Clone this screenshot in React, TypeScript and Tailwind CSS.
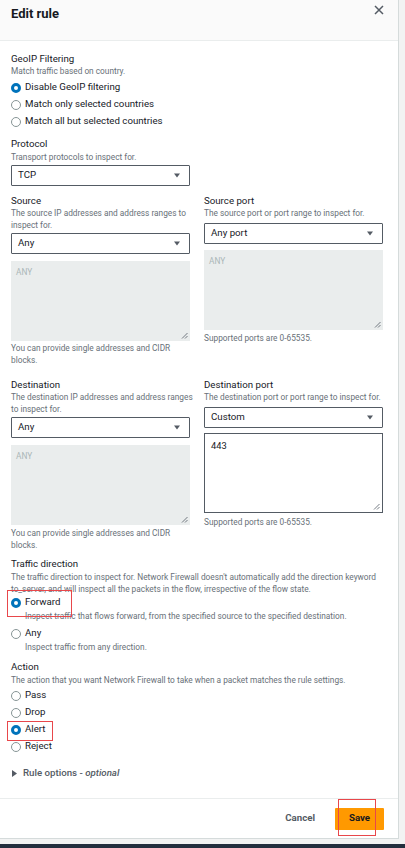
import React from "react";

const Label = ({ children, className = "" }: { children: React.ReactNode; className?: string }) => (
  <div className={`text-[9.7px] leading-[13px] text-[#16191f] ${className}`}>{children}</div>
);

const Desc = ({ children, className = "" }: { children: React.ReactNode; className?: string }) => (
  <div className={`text-[8.3px] leading-[12px] text-[#687078] whitespace-nowrap ${className}`}>{children}</div>
);

const Radio = ({ checked }: { checked?: boolean }) =>
  checked ? (
    <span className="w-[10px] h-[10px] rounded-full border-[3px] border-[#0073bb] bg-white shrink-0" />
  ) : (
    <span className="w-[10px] h-[10px] rounded-full border border-[#879596] bg-white shrink-0" />
  );

const RadioRow = ({
  label,
  checked,
  className = "",
  children,
}: {
  label: string;
  checked?: boolean;
  className?: string;
  children?: React.ReactNode;
}) => (
  <div className={`relative flex items-center gap-[4px] h-[17px] text-[9.7px] text-[#16191f] ${className}`}>
    <Radio checked={checked} />
    <span>{label}</span>
    {children}
  </div>
);

const Caret = () => (
  <svg width="6" height="5" viewBox="0 0 6 5" className="shrink-0">
    <path d="M0 0.5 L6 0.5 L3 4.5 Z" fill="#545b64" />
  </svg>
);

const Select = ({ value, className = "" }: { value: string; className?: string }) => (
  <div
    className={`h-[21px] border border-[#545b64] rounded-[1px] bg-white flex items-center justify-between pl-[6px] pr-[9px] text-[9.7px] text-[#16191f] ${className}`}
  >
    <span>{value}</span>
    <Caret />
  </div>
);

const Grip = () => (
  <svg width="7" height="7" viewBox="0 0 7 7" className="absolute right-[2px] bottom-[2px]">
    <path d="M1 6.5 L6.5 1 M4 6.5 L6.5 4" stroke="#545b64" strokeWidth="0.8" />
  </svg>
);

const GrayArea = ({ className = "" }: { className?: string }) => (
  <div className={`relative h-[80px] bg-[#eaeded] pl-[5px] pt-[5px] text-[8.3px] text-[#aab7b8] ${className}`}>
    ANY
    <Grip />
  </div>
);

export default function App() {
  return (
    <div className="w-[405px] h-[848px] bg-[#f2f3f3] overflow-hidden font-['Roboto',sans-serif] flex flex-col">
      <div className="w-[399px] h-[839px] bg-white border-r border-b border-[#d5dbdb] flex flex-col">
        {/* header */}
        <div className="h-[41px] bg-[#fafafa] border-b border-[#eaeded] flex items-start justify-between pl-[11px] pr-[14px] shrink-0">
          <div className="mt-[6px] text-[13px] leading-[16px] font-bold text-[#16191f]">Edit rule</div>
          <svg width="10" height="10" viewBox="0 0 10 10" className="mt-[5px]">
            <path d="M1 1 L9 9 M9 1 L1 9" stroke="#545b64" strokeWidth="1.5" />
          </svg>
        </div>

        {/* body */}
        <div className="flex-1 pl-[11px] pr-[15px] pt-[11px]">
          <Label>GeoIP Filtering</Label>
          <Desc>Match traffic based on country.</Desc>
          <div className="mt-[2px]">
            <RadioRow label="Disable GeoIP filtering" checked />
            <RadioRow label="Match only selected countries" />
            <RadioRow label="Match all but selected countries" />
          </div>

          <Label className="mt-[7px]">Protocol</Label>
          <Desc className="mt-[1px]">Transport protocols to inspect for.</Desc>
          <Select value="TCP" className="mt-[2px] w-[179px]" />

          <div className="grid grid-cols-2 gap-x-[14px] mt-[8px]">
            <div>
              <Label>Source</Label>
              <Desc>
                The source IP addresses and address ranges to
                <br />
                inspect for.
              </Desc>
              <Select value="Any" className="mt-[2px]" />
              <GrayArea className="mt-[7px]" />
              <Desc className="mt-[1px]">
                You can provide single addresses and CIDR
                <br />
                blocks.
              </Desc>
            </div>
            <div>
              <Label>Source port</Label>
              <Desc>The source port or port range to inspect for.</Desc>
              <Select value="Any port" className="mt-[4px]" />
              <GrayArea className="mt-[6px]" />
              <Desc className="mt-[2px]">Supported ports are 0-65535.</Desc>
            </div>
          </div>

          <div className="grid grid-cols-2 gap-x-[14px] mt-[12px]">
            <div>
              <Label>Destination</Label>
              <Desc>
                The destination IP addresses and address ranges
                <br />
                to inspect for.
              </Desc>
              <Select value="Any" className="mt-[2px]" />
              <GrayArea className="mt-[7px]" />
              <Desc className="mt-[2px]">
                You can provide single addresses and CIDR
                <br />
                blocks.
              </Desc>
            </div>
            <div>
              <Label>Destination port</Label>
              <Desc>The destination port or port range to inspect for.</Desc>
              <Select value="Custom" className="mt-[4px]" />
              <div className="relative mt-[5px] h-[80px] border border-[#545b64] bg-white pl-[6px] pt-[5px] text-[9.3px] text-[#16191f]">
                443
                <Grip />
              </div>
              <Desc className="mt-[3px]">Supported ports are 0-65535.</Desc>
            </div>
          </div>

          <Label className="mt-[6px]">Traffic direction</Label>
          <Desc className="mt-[1px]">
            The traffic direction to inspect for. Network Firewall doesn't automatically add the direction keyword
            <br />
            to_server, and will inspect all the packets in the flow, irrespective of the flow state.
          </Desc>
          <RadioRow label="Forward" checked className="!h-[15px]">
            <span className="absolute left-[-4px] top-[-5px] w-[65px] h-[27px] border border-[#e8474b]" />
          </RadioRow>
          <Desc className="pl-[14px]">
            Inspect traffic that flows forward, from the specified source to the specified destination.
          </Desc>
          <RadioRow label="Any" className="!h-[15px] mt-[4px]" />
          <Desc className="pl-[14px]">Inspect traffic from any direction.</Desc>

          <Label className="mt-[7px]">Action</Label>
          <Desc className="mt-[1px]">
            The action that you want Network Firewall to take when a packet matches the rule settings.
          </Desc>
          <div className="mt-[1px]">
            <RadioRow label="Pass" />
            <RadioRow label="Drop" />
            <RadioRow label="Alert" checked>
              <span className="absolute left-[-4px] top-0 w-[46px] h-[20px] border border-[#e8474b]" />
            </RadioRow>
            <RadioRow label="Reject" />
          </div>

          <div className="mt-[12px] flex items-center gap-[6px] h-[13px] pl-[1px]">
            <svg width="5" height="7" viewBox="0 0 5 7">
              <path d="M0 0 L5 3.5 L0 7 Z" fill="#545b64" />
            </svg>
            <span className="text-[9.7px] font-medium text-[#545b64]">
              Rule options - <i>optional</i>
            </span>
          </div>
        </div>

        {/* footer */}
        <div className="h-[40px] border-t border-[#eaeded] flex items-center justify-end gap-[20px] pr-[14px] shrink-0">
          <span className="text-[9.7px] font-bold text-[#545b64]">Cancel</span>
          <div className="relative w-[49px] h-[22px] bg-[#ff9900] rounded-[1px] flex items-center justify-center text-[9.7px] font-bold text-[#16191f]">
            Save
            <span className="absolute left-[3px] top-[-9px] w-[38px] h-[37px] border border-[#e8474b]" />
          </div>
        </div>
      </div>
      <div className="mt-[5px] h-[4px] bg-[#232f3e]" />
    </div>
  );
}
